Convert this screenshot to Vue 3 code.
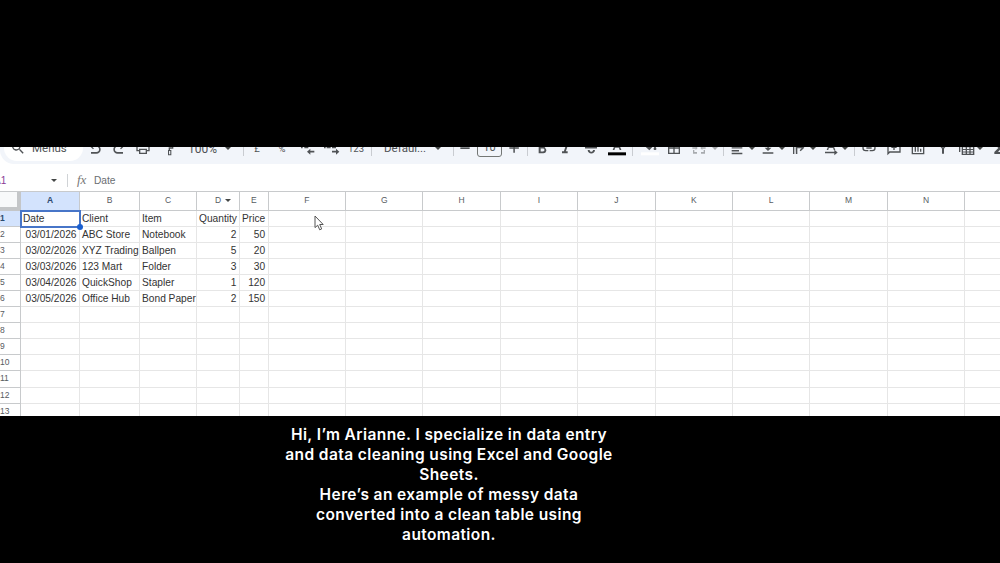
<template>
  <div class="stage">
    <div class="screen">
      <div class="toolbar">
        <div class="search">
          <svg class="icon" viewBox="0 0 24 24"><path :d="icons.search" /></svg>
          <span>Menus</span>
        </div>
        <div
          v-for="(t, i) in tools"
          :key="i"
          :class="['tool', t.type, { faded: t.faded }]"
          :style="{ marginLeft: t.gap + 'px' }"
        >
          <svg v-if="t.type === 'pic'" class="icon" viewBox="0 0 24 24">
            <path :d="icons[t.icon]" fill-rule="evenodd" />
            <path v-if="t.icon === 'color'" class="swatch" d="M-1.500 18.500h27v4.500h-27z" />
            <path v-if="t.icon === 'fill'" class="swatch light" d="M-1.500 18.500h27v4.500h-27z" />
          </svg>
          <template v-else-if="t.text">{{ t.text }}</template>
        </div>
      </div>

      <div class="formula-bar">
        <span class="cell-name">A1</span>
        <i class="caret"></i>
        <i class="divider"></i>
        <span class="fx">fx</span>
        <span class="value">Date</span>
      </div>

      <div class="sheet">
        <div class="corner"></div>
        <div
          v-for="c in columns"
          :key="c"
          :class="['col-head', { active: c === 'A', menu: c === 'D' }]"
        >
          {{ c }}<i v-if="c === 'D'" class="caret"></i>
        </div>
        <template v-for="r in 13" :key="r">
          <div :class="['row-head', { active: r === 1 }]">{{ r }}</div>
          <div
            v-for="(c, ci) in columns"
            :key="c + r"
            :class="['cell', { right: isRight(r, ci), selected: r === 1 && ci === 0 }]"
          >
            <span>{{ rows[r - 1]?.[ci] }}</span>
          </div>
        </template>
      </div>

      <svg class="pointer" viewBox="0 0 10 16">
        <path d="M1 1v11.600l2.700-2.400 2 4.600 2-.9-2-4.400h3.500z" />
      </svg>
    </div>

    <div class="caption">
      <p v-for="line in caption" :key="line">{{ line }}</p>
    </div>
  </div>
</template>

<script setup>
const columns = "ABCDEFGHIJKLMNO".split("");

const rows = [
  ["Date", "Client", "Item", "Quantity", "Price"],
  ["03/01/2026", "ABC Store", "Notebook", "2", "50"],
  ["03/02/2026", "XYZ Trading", "Ballpen", "5", "20"],
  ["03/03/2026", "123 Mart", "Folder", "3", "30"],
  ["03/04/2026", "QuickShop", "Stapler", "1", "120"],
  ["03/05/2026", "Office Hub", "Bond Paper", "2", "150"],
];

// dates and numbers sit on the right
const isRight = (r, ci) => (r > 1 && ci === 0) || ci === 3 || ci === 4;

const caption = [
  "Hi, I’m Arianne. I specialize in data entry",
  "and data cleaning using Excel and Google",
  "Sheets.",
  "Here’s an example of messy data",
  "converted into a clean table using",
  "automation.",
];

const pic = (icon, gap, faded) => ({ type: "pic", icon, gap, faded });
const caret = (gap, faded) => ({ type: "caret", gap, faded });
const sep = (gap) => ({ type: "sep", gap });
const txt = (type, text, gap) => ({ type, text, gap });

const tools = [
  pic("undo", 4),
  pic("redo", 8),
  pic("print", 8),
  pic("paint", 9),
  txt("zoom", "100%", 12),
  caret(9),
  sep(12),
  txt("glyph", "£", 5),
  txt("glyph", "%", 9),
  pic("decLess", 9),
  pic("decMore", 9),
  txt("glyph", "123", 8),
  sep(7),
  txt("font", "Defaul...", 12),
  caret(10),
  sep(12),
  pic("minus", 3),
  txt("size", "10", 4),
  pic("plus", 4),
  sep(5),
  pic("bold", 6),
  pic("italic", 8),
  pic("strike", 9),
  pic("color", 10),
  sep(7),
  pic("fill", 9),
  pic("borders", 8),
  pic("merge", 9, true),
  caret(5, true),
  sep(5),
  pic("align", 5),
  caret(4),
  pic("valign", 5),
  caret(3),
  pic("wrap", 6),
  caret(3),
  pic("rotate", 7),
  caret(3),
  sep(6),
  pic("link", 6),
  pic("comment", 9),
  pic("chart", 8),
  pic("filter", 9),
  pic("table", 8),
  caret(2),
  pic("sigma", 8),
];

const icons = {
  search:
    "M15.5 14h-.8l-.3-.3A6.5 6.5 0 1 0 13.7 14.4l.3.3v.8l5 5 1.5-1.5zM9.5 14a4.5 4.5 0 1 1 0-9 4.5 4.5 0 0 1 0 9z",
  undo: "M6 20.500V18h8.100a4 4 0 0 0 0-8H7.800l2.600 2.600L9 14 4 9l5-5 1.400 1.400-2.600 2.300h6.300a6.400 6.400 0 0 1 0 12.800z",
  redo: "M18 20.500V18H9.900a4 4 0 0 1 0-8h6.300l-2.600 2.600L15 14l5-5-5-5-1.400 1.400 2.600 2.300H9.900a6.400 6.400 0 0 0 0 12.800z",
  print:
    "M19 8h-1V3H6v5H5a3 3 0 0 0-3 3v6h4v4h12v-4h4v-6a3 3 0 0 0-3-3zM8 5h8v3H8zm8 14H8v-4h8zm2-4v-2H6v2H4v-4a1 1 0 0 1 1-1h14a1 1 0 0 1 1 1v4z",
  paint:
    "M4 3h13v2h3v8h-5v2h2v8h-5v-8h1v-4h5V7h-1v2H4zm9.600 13.500v5h1.800v-5z",
  decLess:
    "M3 9h2.500v3.500H3zM8 3h6v9.500H8zm2 2v5.500h2V5zM12 17.500l5-4.500v3.300h6v2.400h-6V22z",
  decMore:
    "M0 9h2.500v3.500H0zM4 3h6v9.500H4zm2 2v5.500h2V5zM12 3h6v9.500h-6zm2 2v5.500h2V5zM23 17.500l-5-4.500v3.300h-6v2.400h6V22z",
  minus: "M5 11h14v2.500H5z",
  plus: "M11 5h2.300v6h6v2.300h-6v6H11v-6H5V11h6z",
  bold: "M7 4h6.5a4.2 4.2 0 0 1 2.4 7.6A4.4 4.4 0 0 1 14 20H7zm3 2.700v3.500h3a1.700 1.700 0 0 0 0-3.500zm0 6.100v4.400h3.500a2.200 2.200 0 0 0 0-4.400z",
  italic: "M10 4v3h2.200l-3.400 10H6v3h8.500v-3h-2.700l3.400-10H18V4z",
  strike:
    "M3 10.500h18v2.300H3zM7 8c0-6 10-6 10-1h-3c0-2-4-2-4 1v2H7.500zM7 15h3c0 3.500 5 3.500 5 0h3c0 7-11 7-11 0z",
  color: "M11 1 5.500 15h2.600l1.200-3.200h5.500l1.200 3.200h2.600L13 1zm-.8 8.600L12 4.200l1.900 5.400z",
  fill: "M8 1l9 8-6 6.500-7-6.500 6-6zM10 6l-4 4h8zM19.500 9c3 4 2.500 6 0 6s-3-2 0-6z",
  borders:
    "M3 3v18h18V3zm8 16H5v-6h6zm0-8H5V5h6zm8 8h-6v-6h6zm0-8h-6V5h6z",
  merge:
    "M3 4h6v2H5v3H3zM15 4h6v5h-2V6h-4zM3 15h2v3h4v2.500H3zM19 15h2v5.500h-6V18h4zM2 11h5V9l3 3-3 3v-2H2zM22 11h-5V9l-3 3 3 3v-2h5z",
  align: "M4 2.500h16v2H4zM4 6.700h11v2H4zM4 10.900h16v2H4zM4 15.100h11v2H4zM4 19.200h16v2.200H4z",
  valign: "M11 2h2.200v9.500h4L12 16.500l-5-5h4zM4 18.500h16v2.300H4z",
  wrap: "M3 3h2v18H3zM19 3h2v6h-2zM7 10.500h9l-3-3L14.500 6 20 11.500l-2 2-3.500 3.500-1.500-1.500 3-3H9.500V21H7.300z",
  rotate:
    "M11 1 5.500 15h2.300l1-3h6.400l1 3h2.300L13 1zM9.600 10 12 4l2.400 6zM3 17.500h14v-3l5 4.200-5 4.200v-3H3z",
  link: "M2 12a5 5 0 0 1 5-5h4v2H7a3 3 0 0 0 0 6h4v2H7a5 5 0 0 1-5-5zM8 11h8v2H8zM13 7h4a5 5 0 0 1 0 10h-4v-2h4a3 3 0 0 0 0-6h-4z",
  comment:
    "M2 3h20v16H6l-4 4zM4 5v13l1-1h15V5zM11 7h2v3h3v2h-3v3h-2v-3H8v-2h3z",
  chart:
    "M2.500 2.500h19v19h-19zM4.500 4.500v15h15v-15zM7 10h2v7.500H7zM11 7h2v10.500h-2zM15 13h2v4.500h-2z",
  filter: "M3 4h18l-7.500 9v7.500h-3V13zM7.500 6l4.500 5.500L16.500 6z",
  table:
    "M0 1h17v3H2v14H0zM4 6h19v16.500H4zM6 11v2.500h4V11zM12 11v2.500h3.500V11zM17.500 11v2.500H21V11zM6 15v2.300h4V15zM12 15v2.300h3.500V15zM17.500 15v2.300H21V15zM6 18.800v2h4v-2zM12 18.800v2h3.500v-2zM17.500 18.800v2H21v-2z",
  sigma: "M5 3h14v3h-8l5 6-5.500 6H19v3H5v-3l6-6-6-6z",
};
</script>

<style>
body {
  background: #000;
}
</style>

<style scoped>
.stage {
  width: 1000px;
  height: 563px;
  padding-top: 147px;
  box-sizing: border-box;
  overflow: hidden;
  background: #000;
}
.screen {
  position: relative;
  height: 269px;
  overflow: hidden;
  background: #fff;
  font-family: "Liberation Sans", Arial, sans-serif;
}
/* only the lower half of the toolbar is in view */
.toolbar {
  display: flex;
  align-items: center;
  width: 1040px;
  height: 32px;
  margin-top: -15px;
  background: #f2f5fa;
  border-radius: 0 0 0 14px;
  color: #505356;
  font-family: Roboto, sans-serif;
}
.search {
  display: flex;
  align-items: center;
  gap: 6px;
  flex: none;
  box-sizing: border-box;
  width: 79px;
  height: 26px;
  margin-left: 4px;
  padding-left: 6px;
  border-radius: 13px;
  background: #fff;
  font-size: 11.500px;
}
.icon {
  display: block;
  width: 16px;
  height: 16px;
  fill: currentColor;
  overflow: visible;
}
.swatch {
  fill: #000;
}
.swatch.light {
  fill: #fff;
}
.tool {
  flex: none;
}
.faded {
  opacity: 0.45;
}
.caret {
  width: 0;
  height: 0;
  border: 3px solid transparent;
  border-top: 3.500px solid #444746;
  border-bottom: 0;
}
.sep {
  width: 1px;
  height: 15px;
  background: #c9ccd1;
}
.zoom {
  width: 28px;
  padding-top: 2px;
  font-size: 12px;
}
.glyph {
  width: 16px;
  text-align: center;
  font-size: 9.500px;
}
.font {
  width: 41px;
  font-size: 11.500px;
  white-space: nowrap;
}
.size {
  box-sizing: border-box;
  width: 25px;
  height: 18px;
  border: 1px solid #747775;
  border-radius: 3px;
  text-align: center;
  font-size: 11px;
  line-height: 16px;
}
.formula-bar {
  display: flex;
  align-items: center;
  box-sizing: border-box;
  height: 27px;
  padding-top: 5px;
  color: #6a6e72;
  font-size: 10px;
}
.cell-name {
  width: 51px;
  margin-left: -6px;
  color: #8a3a96;
}
.formula-bar .caret {
  margin-left: 6px;
}
.divider {
  width: 1px;
  height: 13px;
  margin-left: 10px;
  background: #d0d3d6;
}
.fx {
  width: 17px;
  margin-left: 9px;
  font-family: "Liberation Serif", serif;
  font-style: italic;
  font-size: 13px;
  color: #777;
}
.value {
  font-size: 10.200px;
}
.sheet {
  display: grid;
  grid-template-columns: 21px 59px 60px 57px 43px 28.700px repeat(10, 77.400px);
  grid-template-rows: 18.500px repeat(13, 16.100px);
  width: 1043px;
  border-top: 1px solid #c8cacc;
}
.sheet > div {
  box-sizing: border-box;
  border-right: 1px solid #e6e6e6;
  border-bottom: 1px solid #e6e6e6;
}
.sheet > .corner {
  border-right: 4px solid #c4c6c8;
  border-bottom: 4px solid #c4c6c8;
  background: #f8f9fa;
}
.sheet > .col-head,
.sheet > .row-head {
  display: flex;
  align-items: center;
  justify-content: center;
  border-color: #c8cacc;
  padding-bottom: 1px;
  color: #575b5f;
  font-size: 8.500px;
}
.sheet > .active {
  background: #d3e3fd;
  color: #2c4a6e;
  font-weight: bold;
}
.sheet > .col-head.menu {
  padding-left: 10px;
}
.col-head .caret {
  margin-left: 4px;
}
.sheet > .row-head {
  justify-content: flex-start;
}
.cell {
  padding: 0 2px;
  color: #333;
  font-size: 10.200px;
  line-height: 16px;
  white-space: nowrap;
}
.cell.right {
  padding-right: 2.500px;
  text-align: right;
}
.sheet > .selected {
  position: relative;
  border: 0;
  outline: 2px solid #4775c8;
  outline-offset: -1px;
}
.selected::after {
  content: "";
  position: absolute;
  right: -3px;
  bottom: -3px;
  width: 6px;
  height: 6px;
  border-radius: 50%;
  background: #1a5fd0;
}
.pointer {
  position: absolute;
  left: 314px;
  top: 68px;
  width: 10px;
  height: 16px;
  fill: #fff;
  stroke: #555;
  stroke-width: 1;
}
.caption {
  width: 898px;
  padding-top: 9px;
  color: #fff;
  text-align: center;
  font-family: Inter, sans-serif;
  font-size: 15.500px;
  font-weight: 600;
  letter-spacing: 0.400px;
  line-height: 19.900px;
}
.caption p {
  margin: 0;
}
</style>
